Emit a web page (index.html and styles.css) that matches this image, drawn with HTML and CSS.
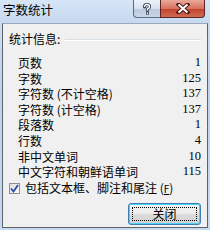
FILE: index.html
```html
<!DOCTYPE html>
<html>
<head>
<meta charset="utf-8">
<link rel="stylesheet" href="styles.css">
</head>
<body>
<div class="window">
  <div class="titlebar">
    <span class="title">字数统计</span>
    <div class="caption-btns">
      <div class="cbtn help">
        <svg width="12" height="12" viewBox="0 0 12 12"><path d="M3.5 4 Q3.5 1.5 6 1.5 Q8.5 1.5 8.5 3.8 Q8.5 5.2 6.5 6 L6.5 7.5" fill="none" stroke="#3a4a5e" stroke-width="3.2" stroke-linecap="round"/><path d="M3.5 4 Q3.5 1.5 6 1.5 Q8.5 1.5 8.5 3.8 Q8.5 5.2 6.5 6 L6.5 7.5" fill="none" stroke="#fff" stroke-width="1.4"/><rect x="5" y="8.6" width="3" height="3" fill="#3a4a5e"/><rect x="5.8" y="9.4" width="1.4" height="1.4" fill="#fff"/></svg>
      </div>
      <div class="cbtn close">
        <svg width="14" height="11" viewBox="0 0 14 11"><path d="M2.5 1.5 L11.5 9.5 M11.5 1.5 L2.5 9.5" stroke="#4a1c18" stroke-width="4" stroke-linecap="square"/><path d="M2.5 1.5 L11.5 9.5 M11.5 1.5 L2.5 9.5" stroke="#fff" stroke-width="2"/></svg>
      </div>
    </div>
  </div>
  <div class="client">
    <div class="group-head">
      <span class="group-label">统计信息:</span>
      <div class="group-line"></div>
    </div>
    <div class="rows">
      <div class="row"><span>页数</span><span class="num">1</span></div>
      <div class="row"><span>字数</span><span class="num">125</span></div>
      <div class="row"><span>字符数 (不计空格)</span><span class="num">137</span></div>
      <div class="row"><span>字符数 (计空格)</span><span class="num">137</span></div>
      <div class="row"><span>段落数</span><span class="num">1</span></div>
      <div class="row"><span>行数</span><span class="num">4</span></div>
      <div class="row"><span>非中文单词</span><span class="num">10</span></div>
      <div class="row"><span>中文字符和朝鲜语单词</span><span class="num">115</span></div>
    </div>
    <div class="check">
      <span class="box">
        <svg width="9" height="9" viewBox="0 0 9 9"><path d="M1 4.5 L3.5 7.5 L8 1" fill="none" stroke="#2a4aa8" stroke-width="1.8"/></svg>
      </span>
      <span class="check-label">包括文本框、脚注和尾注 (<u>F</u>)</span>
    </div>
    <div class="footer">
      <div class="button"><span class="focus">关闭</span></div>
    </div>
  </div>
</div>
</body>
</html>
```
FILE: styles.css
```css
html, body {
  margin: 0;
  padding: 0;
}
body {
  width: 210px;
  height: 230px;
  overflow: hidden;
  font-family: "Noto Sans CJK SC", "Noto Sans", sans-serif;
  font-size: 12px;
  color: #000;
}
.window {
  width: 210px;
  height: 230px;
  box-sizing: border-box;
  background: linear-gradient(#cfe0f3, #bcd3ee 40%, #c6daf2);
  display: flex;
  flex-direction: column;
}
.titlebar {
  height: 23px;
  display: flex;
  justify-content: space-between;
  align-items: flex-start;
  background: linear-gradient(#d6e5f6, #c6d9f0);
}
.title {
  padding-left: 3px;
  padding-top: 2px;
  line-height: 16px;
  font-size: 12.5px;
  color: #000;
}
.caption-btns {
  display: flex;
  margin-right: 5px;
}
.cbtn {
  height: 18px;
  box-sizing: border-box;
  display: flex;
  align-items: center;
  justify-content: center;
  border: 1px solid #5b6b80;
  border-top: none;
}
.help {
  width: 27px;
  border-radius: 0 0 0 4px;
  border-right: none;
  background: linear-gradient(#eef3fa, #d7e1ee 50%, #bccadd 51%, #c9d6e8);
}
.close {
  width: 45px;
  border-color: #5a2420;
  border-radius: 0 0 4px 0;
  background: linear-gradient(#e9a99b, #d7725e 50%, #c2412b 51%, #cf6a4e);
}
.client {
  flex: 1;
  margin: 0 2px 2px 2px;
  background: #f0f0f0;
  border: 1px solid #5f6368;
  border-top-color: #9aa8b8;
  display: flex;
  flex-direction: column;
  padding: 8px 6px 0 6px;
}
.group-head {
  display: flex;
  align-items: center;
  height: 14px;
}
.group-label {
  line-height: 14px;
}
.group-line {
  flex: 1;
  margin-left: 5px;
  margin-top: 1px;
  border-top: 1px solid #d5dfe5;
  border-bottom: 1px solid #fff;
}
.rows {
  margin-top: 9px;
  padding-left: 9px;
}
.row {
  height: 15.6px;
  line-height: 15.6px;
  display: flex;
  justify-content: space-between;
}
.num {
  font-family: "Liberation Serif", serif;
  font-size: 12.5px;
}
.check {
  margin-top: 2px;
  display: flex;
  align-items: center;
  height: 14px;
}
.box {
  width: 11px;
  height: 11px;
  box-sizing: border-box;
  border: 1px solid #8f8f8f;
  background: linear-gradient(135deg, #dcdcdc, #fff);
  display: flex;
  align-items: center;
  justify-content: center;
}
.check-label {
  margin-left: 5px;
  line-height: 14px;
}
.check-label u {
  font-size: 10px;
}
.footer {
  display: flex;
  justify-content: flex-end;
  margin-top: 7px;
}
.button {
  width: 73px;
  height: 22px;
  box-sizing: border-box;
  border: 1px solid #3c7fb1;
  border-radius: 3px;
  box-shadow: inset 0 0 0 1px #48d2f8;
  background: linear-gradient(#f2f2f2, #ebebeb 50%, #dddddd 51%, #cfcfcf);
  padding: 3px;
  display: flex;
}
.focus {
  flex: 1;
  border: 1px dotted #000;
  display: flex;
  align-items: center;
  justify-content: center;
  line-height: 12px;
}
```
